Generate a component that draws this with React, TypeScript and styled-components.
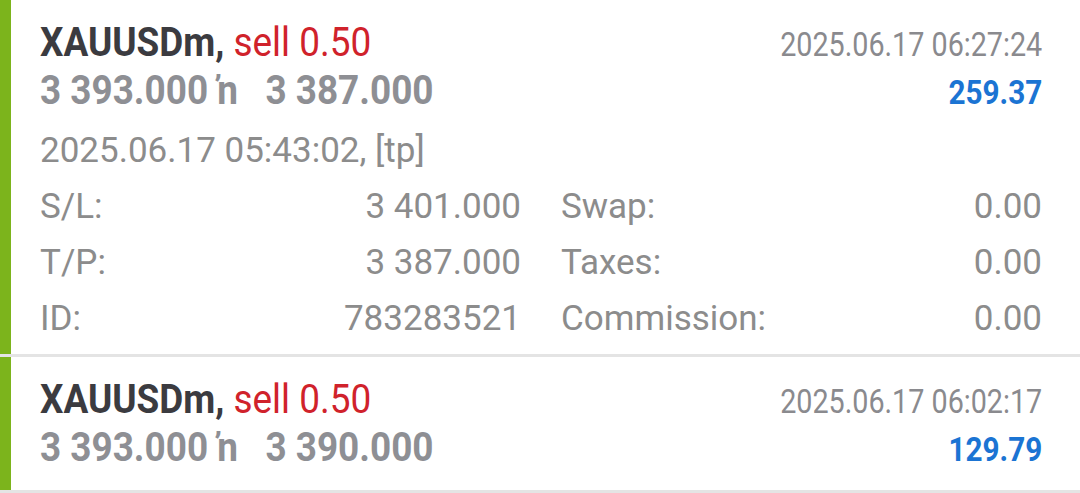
import styled, { createGlobalStyle } from 'styled-components';

const GlobalStyle = createGlobalStyle`
  html, body {
    margin: 0;
    padding: 0;
    background: #ffffff;
  }
  body {
    font-family: Roboto, "Noto Sans", sans-serif;
  }
`;

const List = styled.div`
  display: flex;
  flex-direction: column;
  width: 1080px;
`;

const Card = styled.div`
  display: flex;
  border-bottom: 3px solid #e4e4e4;
`;

const Bar = styled.div`
  width: 11px;
  flex-shrink: 0;
  background: #7cb41c;
`;

const Body = styled.div<{ $expanded?: boolean }>`
  flex: 1;
  min-width: 0;
  padding: 18px 38px ${(p) => (p.$expanded ? '7px' : '19px')} 29px;
`;

const Line = styled.div`
  display: flex;
  justify-content: space-between;
  align-items: baseline;
  line-height: 48px;
`;

// the app font is a condensed face, squeeze Roboto to match
const Symbol = styled.div`
  font-size: 41px;
  font-weight: 700;
  color: #3b3b40;
  transform: scaleX(0.9);
  transform-origin: left center;
  white-space: nowrap;
`;

const Side = styled.span`
  font-weight: 400;
  color: #d0222b;
`;

const Prices = styled.div`
  font-size: 41px;
  font-weight: 700;
  color: #8e8f94;
  transform: scaleX(0.9);
  transform-origin: left center;
  white-space: pre;
`;

const Time = styled.div`
  font-size: 33px;
  line-height: 40px;
  color: #8a8a8e;
  transform: scaleX(0.87);
  transform-origin: right center;
  white-space: nowrap;
`;

const Profit = styled.div`
  font-size: 33px;
  line-height: 40px;
  font-weight: 700;
  color: #1b74d3;
  transform: scaleX(0.9);
  transform-origin: right center;
`;

const Details = styled.div`
  display: grid;
  grid-template-columns: 1fr 1fr;
  column-gap: 40px;
  margin-top: 9px;
  font-size: 35px;
  line-height: 56px;
  color: #8c8c8c;
`;

const Opened = styled.div`
  grid-column: 1 / -1;
`;

const Field = styled.div`
  display: flex;
  justify-content: space-between;
  white-space: nowrap;
`;

type Position = {
  symbol: string;
  side: string;
  volume: string;
  open: string;
  close: string;
  time: string;
  profit: string;
  details?: {
    opened: string;
    sl: string;
    tp: string;
    id: string;
    swap: string;
    taxes: string;
    commission: string;
  };
};

const positions: Position[] = [
  {
    symbol: 'XAUUSDm',
    side: 'sell',
    volume: '0.50',
    open: '3 393.000',
    close: '3 387.000',
    time: '2025.06.17 06:27:24',
    profit: '259.37',
    details: {
      opened: '2025.06.17 05:43:02, [tp]',
      sl: '3 401.000',
      tp: '3 387.000',
      id: '783283521',
      swap: '0.00',
      taxes: '0.00',
      commission: '0.00',
    },
  },
  {
    symbol: 'XAUUSDm',
    side: 'sell',
    volume: '0.50',
    open: '3 393.000',
    close: '3 390.000',
    time: '2025.06.17 06:02:17',
    profit: '129.79',
  },
];

function PositionCard({ p }: { p: Position }) {
  const d = p.details;
  return (
    <Card>
      <Bar />
      <Body $expanded={!!d}>
        <Line>
          <Symbol>
            {p.symbol}, <Side>{p.side} {p.volume}</Side>
          </Symbol>
          <Time>{p.time}</Time>
        </Line>
        <Line>
          <Prices>{`${p.open} \u0149   ${p.close}`}</Prices>
          <Profit>{p.profit}</Profit>
        </Line>
        {d && (
          <Details>
            <Opened>{d.opened}</Opened>
            <Field><span>S/L:</span><span>{d.sl}</span></Field>
            <Field><span>Swap:</span><span>{d.swap}</span></Field>
            <Field><span>T/P:</span><span>{d.tp}</span></Field>
            <Field><span>Taxes:</span><span>{d.taxes}</span></Field>
            <Field><span>ID:</span><span>{d.id}</span></Field>
            <Field><span>Commission:</span><span>{d.commission}</span></Field>
          </Details>
        )}
      </Body>
    </Card>
  );
}

export default function App() {
  return (
    <>
      <GlobalStyle />
      <List>
        {positions.map((p) => (
          <PositionCard key={p.time} p={p} />
        ))}
      </List>
    </>
  );
}
